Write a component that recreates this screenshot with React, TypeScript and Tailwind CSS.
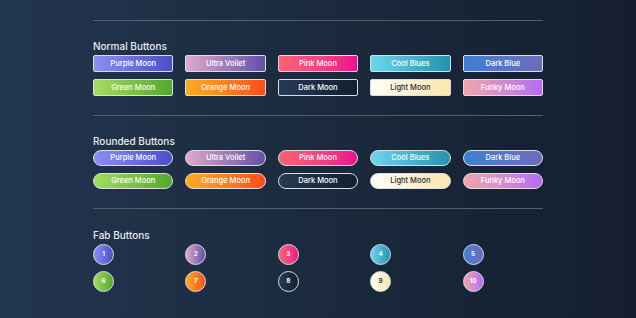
const buttons = [
  { label: "Purple Moon", grad: "bg-gradient-to-r from-[#8d8ef6] to-[#4a50c6]", text: "text-white" },
  { label: "Ultra Voilet", grad: "bg-gradient-to-r from-[#dfa9cb] to-[#6650a6]", text: "text-white" },
  { label: "Pink Moon", grad: "bg-gradient-to-r from-[#fc6170] to-[#eb0d8c]", text: "text-white" },
  { label: "Cool Blues", grad: "bg-gradient-to-r from-[#6dd5ed] to-[#2193b0]", text: "text-white" },
  { label: "Dark Blue", grad: "bg-gradient-to-r from-[#3a7fd2] to-[#6b6cba]", text: "text-white" },
  { label: "Green Moon", grad: "bg-gradient-to-r from-[#a3dd5f] to-[#52a82c]", text: "text-white" },
  { label: "Orange Moon", grad: "bg-gradient-to-r from-[#fbac22] to-[#fd4a1a]", text: "text-white" },
  { label: "Dark Moon", grad: "bg-gradient-to-r from-[#243b55] to-[#141e30]", text: "text-white" },
  { label: "Light Moon", grad: "bg-gradient-to-r from-[#fffdf6] to-[#fbe6ad]", text: "text-[#1f2937]" },
  { label: "Funky Moon", grad: "bg-gradient-to-r from-[#f2a5a6] to-[#b66af5]", text: "text-white" },
];

function Heading({ children }: { children: string }) {
  return (
    <h3 className="text-[10px] leading-[12px] font-medium text-[#e8ebf0] mb-[3px]">{children}</h3>
  );
}

export default function App() {
  return (
    <div
      className="w-[636px] h-[318px] overflow-hidden bg-gradient-to-r from-[#22364f] to-[#141e2e] px-[93px] pt-[20px]"
      style={{ fontFamily: "Inter, 'Liberation Sans', sans-serif" }}
    >
      {/* Normal */}
      <section className="border-t border-[#55606f] pt-[19px] pb-[19px]">
        <Heading>Normal Buttons</Heading>
        <div className="grid grid-cols-5 gap-x-[12px] gap-y-[7px]">
          {buttons.map((b) => (
            <button
              key={b.label}
              className={`h-[17px] rounded-[2px] border-[1.5px] border-[#dcdee2] text-[7.5px] font-medium leading-none ${b.grad} ${b.text}`}
            >
              {b.label}
            </button>
          ))}
        </div>
      </section>

      {/* Rounded */}
      <section className="border-t border-[#55606f] pt-[19px] pb-[19px]">
        <Heading>Rounded Buttons</Heading>
        <div className="grid grid-cols-5 gap-x-[12px] gap-y-[7px]">
          {buttons.map((b) => (
            <button
              key={b.label}
              className={`h-[16px] rounded-full border-[1.5px] border-[#dcdee2] text-[7.5px] font-medium leading-none ${b.grad} ${b.text}`}
            >
              {b.label}
            </button>
          ))}
        </div>
      </section>

      {/* Fab */}
      <section className="border-t border-[#55606f] pt-[20px]">
        <Heading>Fab Buttons</Heading>
        <div className="grid grid-cols-5 gap-x-[12px] gap-y-[6px]">
          {buttons.map((b, i) => (
            <div key={b.label}>
              <button
                className={`w-[21px] h-[21px] rounded-full border-[1.5px] border-[#dcdee2] text-[6.5px] font-semibold leading-none flex items-center justify-center ${b.grad} ${b.text}`}
              >
                {i + 1}
              </button>
            </div>
          ))}
        </div>
      </section>
    </div>
  );
}
